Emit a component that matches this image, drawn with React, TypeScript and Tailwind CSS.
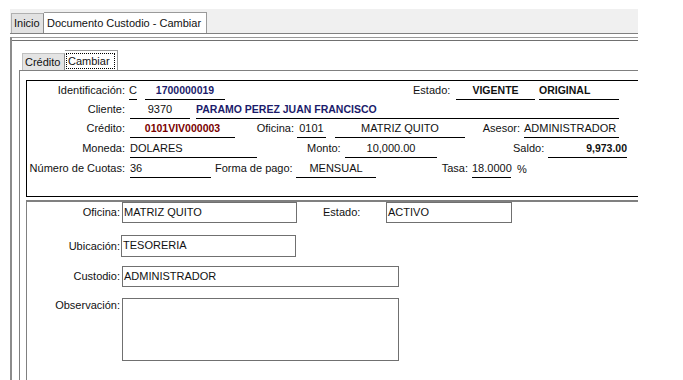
import React from "react";

const navy = "text-[#1b1b6b] font-bold text-[10.5px]";
const red = "text-[#7a0000] font-bold text-[10.5px]";

export default function App() {
  return (
    <div className="w-[683px] h-[380px] overflow-hidden bg-white font-['Liberation_Sans',Arial,sans-serif] text-[11px] text-[#111] leading-none whitespace-nowrap">
      <div className="ml-[10px] mt-[9px] w-[628px] overflow-hidden">
        {/* outer tab strip */}
        <div className="h-[25px] bg-[#f0f0f0] border-b border-[#808080] flex items-end pl-[1px]">
          <div className="h-[20px] w-[33px] bg-[#e2e2e2] border-t border-l border-[#b0b0b0] border-r border-r-[#8a8a8a] flex items-center pl-[2px]">
            Inicio
          </div>
          <div className="h-[21px] w-[163px] bg-white border-t border-r border-[#9a9a9a] flex items-center pl-[3px]">
            Documento Custodio - Cambiar
          </div>
        </div>
        {/* frame */}
        <div className="border-l-2 border-[#8c8c8c] h-[400px]">
          <div className="mt-[3px] border-t border-[#9a9a9a]">
            <div className="mt-[2px] border-t border-[#707070]">
              {/* inner tabs */}
              <div className="h-[29px] flex items-end pl-[10px]">
                <div className="h-[17px] w-[43px] bg-[#e4e4e4] border-t border-l border-[#c0c0c0] border-r border-r-[#8a8a8a] flex items-center pl-[2px]">
                  Crédito
                </div>
                <div className="h-[20px] w-[53px] bg-white border-t border-r border-[#9a9a9a] flex items-start pt-[2px] pl-[1px]">
                  <div className="h-[16px] w-[49px] border border-dotted border-black flex items-center pl-[1px]">
                    Cambiar
                  </div>
                </div>
              </div>
              {/* tab pane */}
              <div className="ml-[7px] border-t border-l border-[#808080] h-[320px]">
                {/* header box */}
                <div className="ml-[6px] mt-[9px] w-[700px] h-[117px] border border-black">
                  {/* row 1 */}
                  <div className="flex h-[19px]">
                    <div className="w-[98px] text-right leading-[18px]">Identificación:</div>
                    <div className="ml-[4px] w-[8px] h-[19px] border-b border-black leading-[18px]">C</div>
                    <div className={`ml-[8px] w-[80px] h-[19px] border-b border-black leading-[18px] text-center ${navy}`}>1700000019</div>
                    <div className="ml-[188px] w-[40px] leading-[18px]">Estado:</div>
                    <div className="ml-[3px] w-[79px] h-[19px] border-b border-black leading-[18px] text-center font-bold text-[10.5px]">VIGENTE</div>
                    <div className="ml-[4px] w-[80px] h-[19px] border-b border-black leading-[18px] font-bold text-[10.5px]">ORIGINAL</div>
                  </div>
                  {/* row 2 */}
                  <div className="flex h-[19px]">
                    <div className="w-[98px] text-right leading-[18px]">Cliente:</div>
                    <div className="ml-[5px] w-[60px] h-[19px] border-b border-black leading-[18px] text-center">9370</div>
                    <div className={`ml-[6px] w-[423px] h-[19px] border-b border-black leading-[18px] ${navy}`}>PARAMO PEREZ JUAN FRANCISCO</div>
                  </div>
                  {/* row 3 */}
                  <div className="flex h-[19px]">
                    <div className="w-[98px] text-right leading-[18px]">Crédito:</div>
                    <div className={`ml-[5px] w-[105px] h-[19px] border-b border-black leading-[18px] text-center ${red}`}>0101VIV000003</div>
                    <div className="ml-[20px] w-[39px] text-right leading-[18px]">Oficina:</div>
                    <div className="ml-[3px] w-[29px] h-[19px] border-b border-black leading-[18px] text-center">0101</div>
                    <div className="ml-[9px] w-[130px] h-[19px] border-b border-black leading-[18px] text-center">MATRIZ QUITO</div>
                    <div className="ml-[15px] w-[40px] text-right leading-[18px]">Asesor:</div>
                    <div className="ml-[4px] w-[95px] h-[19px] border-b border-black leading-[18px]">ADMINISTRADOR</div>
                  </div>
                  {/* row 4 */}
                  <div className="flex h-[19px] mt-[1px]">
                    <div className="w-[98px] text-right leading-[18px]">Moneda:</div>
                    <div className="ml-[5px] w-[127px] h-[19px] border-b border-black leading-[18px]">DOLARES</div>
                    <div className="ml-[50px] w-[34px] leading-[18px]">Monto:</div>
                    <div className="ml-[4px] w-[92px] h-[19px] border-b border-black leading-[18px] text-center">10,000.00</div>
                    <div className="ml-[76px] w-[32px] leading-[18px]">Saldo:</div>
                    <div className="ml-[3px] w-[79px] h-[19px] border-b border-black leading-[18px] text-right font-bold text-[10.5px]">9,973.00</div>
                  </div>
                  {/* row 5 */}
                  <div className="flex h-[19px] mt-[1px]">
                    <div className="w-[98px] text-right leading-[18px]">Número de Cuotas:</div>
                    <div className="ml-[5px] w-[81px] h-[19px] border-b border-black leading-[18px]">36</div>
                    <div className="ml-[4px] w-[76px] leading-[18px]">Forma de pago:</div>
                    <div className="ml-[5px] w-[80px] h-[19px] border-b border-black leading-[18px] text-center">MENSUAL</div>
                    <div className="ml-[62px] w-[30px] text-right leading-[18px]">Tasa:</div>
                    <div className="ml-[4px] w-[39px] h-[19px] border-b border-black leading-[18px]">18.0000</div>
                    <div className="ml-[6px] leading-[20px]">%</div>
                  </div>
                </div>
                {/* detail box */}
                <div className="ml-[6px] mt-[3px] w-[700px] h-[300px] border-t-2 border-l border-[#808080]">
                  <div className="flex items-center">
                    <div className="w-[93px] text-right">Oficina:</div>
                    <div className="ml-[2px] w-[175px] h-[21px] border border-[#707070] pl-[1px] pt-[4px]">MATRIZ QUITO</div>
                    <div className="ml-[26px] w-[36px]">Estado:</div>
                    <div className="ml-[27px] w-[126px] h-[21px] border border-[#707070] pl-[1px] pt-[4px]">ACTIVO</div>
                  </div>
                  <div className="flex items-center mt-[12px]">
                    <div className="w-[93px] text-right">Ubicación:</div>
                    <div className="ml-[1px] w-[175px] h-[22px] border border-[#707070] pl-[1px] pt-[4px]">TESORERIA</div>
                  </div>
                  <div className="flex items-center mt-[9px]">
                    <div className="w-[93px] text-right">Custodio:</div>
                    <div className="ml-[2px] w-[277px] h-[21px] border border-[#707070] pl-[1px] pt-[4px]">ADMINISTRADOR</div>
                  </div>
                  <div className="flex items-start mt-[11px]">
                    <div className="w-[93px] text-right pt-[2px]">Observación:</div>
                    <div className="ml-[2px] w-[277px] h-[63px] border border-[#707070]"></div>
                  </div>
                </div>
              </div>
            </div>
          </div>
        </div>
      </div>
    </div>
  );
}
